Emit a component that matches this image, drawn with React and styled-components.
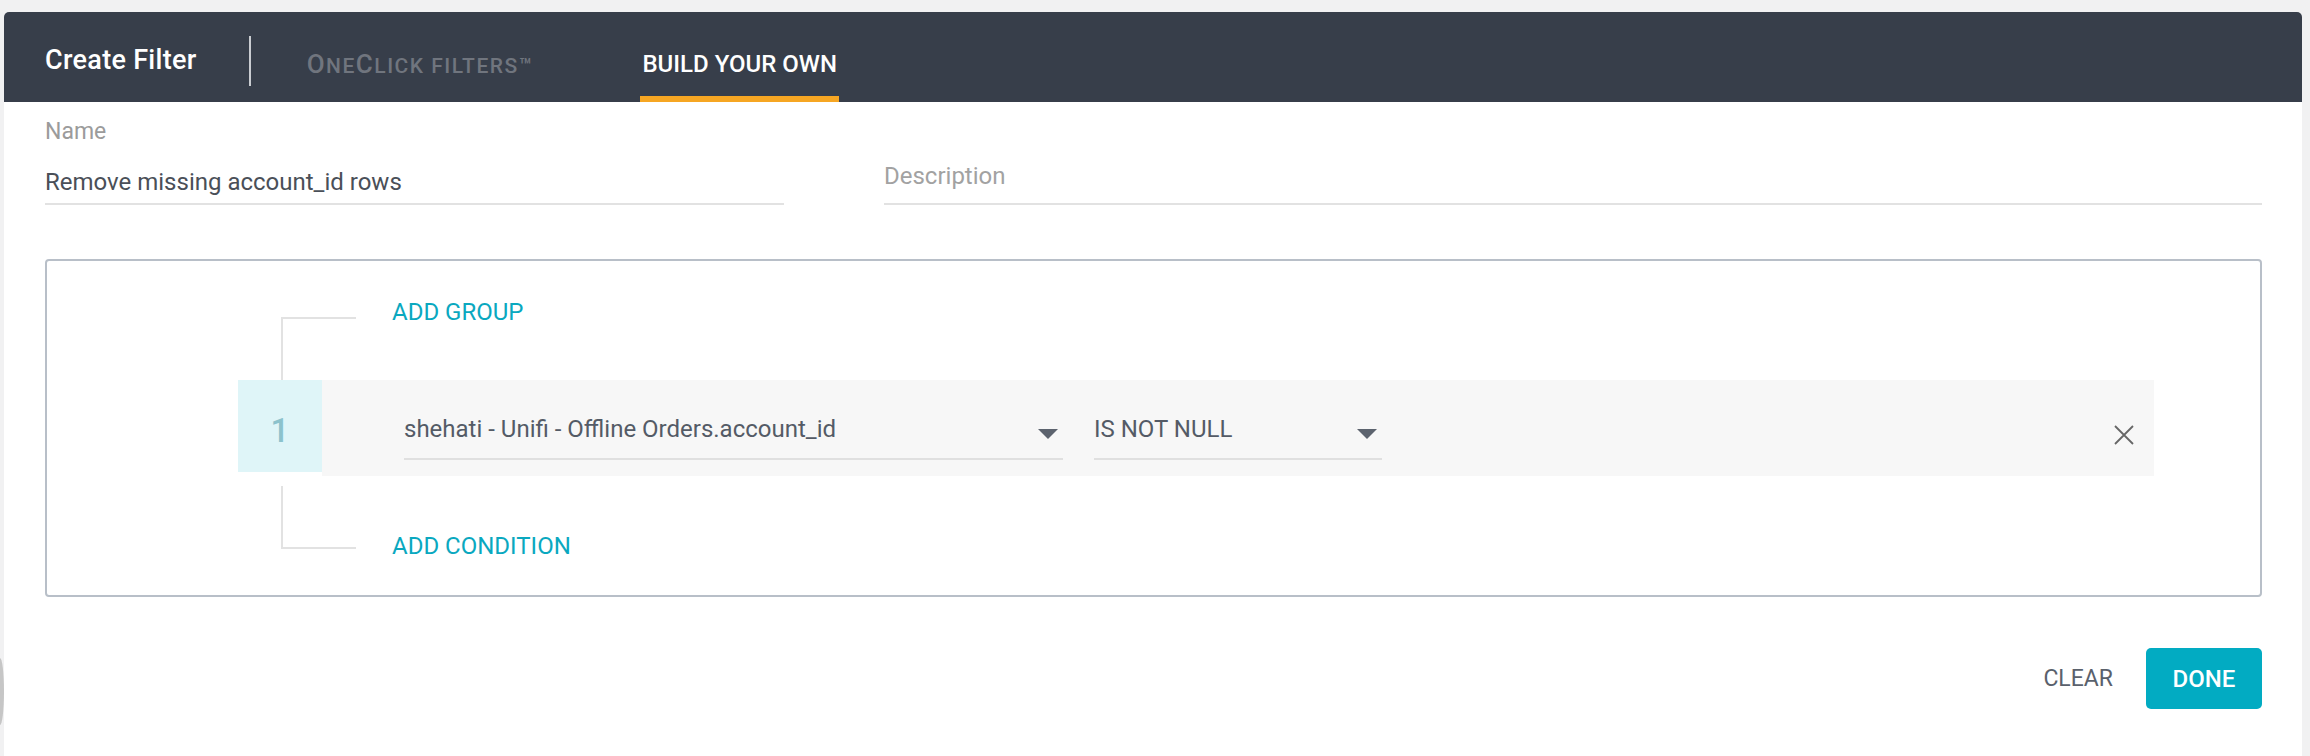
import React from 'react';
import styled, { createGlobalStyle } from 'styled-components';

const GlobalStyle = createGlobalStyle`
  html, body {
    margin: 0;
    padding: 0;
    background: #f1f1f2;
    font-family: Roboto, "Liberation Sans", Arial, sans-serif;
  }
  * {
    box-sizing: border-box;
  }
`;

const Page = styled.div`
  min-height: 100vh;
  padding: 12px 8px 0 4px;
`;

const Modal = styled.div`
  background: #fff;
  border-radius: 5px 5px 0 0;
  min-height: calc(100vh - 12px);
`;

const Header = styled.header`
  display: flex;
  align-items: flex-start;
  height: 90px;
  padding-left: 41px;
  background: #373e4a;
  border-radius: 5px 5px 0 0;
`;

const Title = styled.div`
  padding-top: 35px;
  font-size: 27px;
  line-height: 27px;
  font-weight: 500;
  letter-spacing: 0.3px;
  color: #fff;
`;

const Divider = styled.div`
  width: 2px;
  height: 50px;
  margin: 24px 0 0 52px;
  background: #c9ccd1;
`;

const Tab = styled.div`
  height: 90px;
  margin-left: ${(props) => props.offset}px;
  padding: 40px 2px 0;
  font-size: 24px;
  line-height: 24px;
  font-weight: 500;
  letter-spacing: ${(props) => (props.active ? '0' : '1.5px')};
  color: ${(props) => (props.active ? '#fff' : '#70757e')};
  border-bottom: 6px solid ${(props) => (props.active ? '#f6a623' : 'transparent')};
`;

const Big = styled.span`
  font-size: 26px;
`;

const Small = styled.span`
  font-size: 21px;
`;

const Body = styled.div`
  padding: 18px 40px 0 41px;
`;

const FieldsRow = styled.div`
  display: flex;
  align-items: flex-end;
  gap: 100px;
`;

const NameField = styled.div`
  width: 739px;
`;

const Label = styled.div`
  margin-bottom: 27px;
  font-size: 23px;
  line-height: 23px;
  color: #9b9b9b;
`;

const Input = styled.div`
  flex: ${(props) => (props.grow ? 1 : 'none')};
  padding-bottom: ${(props) => (props.placeholder ? 15 : 9)}px;
  font-size: 24px;
  line-height: 24px;
  color: ${(props) => (props.placeholder ? '#a2a2a2' : '#4a4f58')};
  border-bottom: 2px solid #e2e2e2;
`;

const FilterBox = styled.div`
  margin-top: 54px;
  padding: 0 106px 37px 191px;
  border: 2px solid #b8bfc8;
  border-radius: 4px;
`;

const Branch = styled.div`
  display: flex;
  align-items: flex-start;
`;

const Connector = styled.div`
  width: 75px;
  height: 63px;
  margin: ${(props) => (props.bottom ? '10px' : '56px')} 0 0 43px;
  border-left: 2px solid #e2e2e2;
  border-${(props) => (props.bottom ? 'bottom' : 'top')}: 2px solid #e2e2e2;
`;

const AddLink = styled.button`
  margin: ${(props) => props.top}px 0 0 36px;
  padding: 0;
  border: none;
  background: none;
  font-family: inherit;
  font-size: 24px;
  line-height: 24px;
  color: #0aa8bf;
  cursor: pointer;
`;

const Row = styled.div`
  display: flex;
  height: 96px;
`;

const NumberCell = styled.div`
  display: flex;
  align-items: center;
  justify-content: center;
  width: 84px;
  height: 92px;
  padding-top: 8px;
  background: #dff5f8;
  font-size: 33px;
  line-height: 33px;
  font-weight: 500;
  color: #8cc2cc;
`;

const Condition = styled.div`
  flex: 1;
  display: flex;
  align-items: flex-start;
  gap: 31px;
  padding: 37px 20px 0 82px;
  background: #f7f7f7;
`;

const Select = styled.div`
  display: flex;
  justify-content: space-between;
  align-items: flex-start;
  width: ${(props) => props.width}px;
  padding-bottom: 17px;
  border-bottom: 2px solid #e0e0e0;
  font-size: 24px;
  line-height: 24px;
  color: #545b66;
`;

const Caret = styled.span`
  width: 0;
  height: 0;
  margin: 12px 5px 0 0;
  border-left: 10.5px solid transparent;
  border-right: 10.5px solid transparent;
  border-top: 10px solid #5c636e;
`;

const CloseButton = styled.button`
  display: flex;
  margin: 8px 0 0 auto;
  padding: 0;
  border: none;
  background: none;
  cursor: pointer;
`;

const Footer = styled.div`
  display: flex;
  justify-content: flex-end;
  align-items: center;
  gap: 33px;
  padding-top: 51px;
`;

const ClearButton = styled.button`
  padding: 0;
  border: none;
  background: none;
  font-family: inherit;
  font-size: 23px;
  color: #5a616c;
  cursor: pointer;
`;

const DoneButton = styled.button`
  width: 116px;
  height: 61px;
  border: none;
  border-radius: 5px;
  background: #02abc2;
  font-family: inherit;
  font-size: 24px;
  font-weight: 500;
  color: #fff;
  cursor: pointer;
`;

const Grip = styled.div`
  position: fixed;
  left: -4px;
  top: 658px;
  width: 8px;
  height: 67px;
  border-radius: 50%;
  background: #c6c6c6;
`;

const CloseIcon = () => (
  <svg width="20" height="20" viewBox="0 0 20 20">
    <path d="M1 1 L19 19 M19 1 L1 19" stroke="#666" strokeWidth="1.8" fill="none" />
  </svg>
);

const App = () => (
  <Page>
    <GlobalStyle />
    <Grip />
    <Modal>
      <Header>
        <Title>Create Filter</Title>
        <Divider />
        <Tab offset={54}>
          <Big>O</Big>
          <Small>NE</Small>
          <Big>C</Big>
          <Small>LICK FILTERS™</Small>
        </Tab>
        <Tab offset={105} active>
          BUILD YOUR OWN
        </Tab>
      </Header>

      <Body>
        <FieldsRow>
          <NameField>
            <Label>Name</Label>
            <Input>Remove missing account_id rows</Input>
          </NameField>
          <Input grow placeholder>
            Description
          </Input>
        </FieldsRow>

        <FilterBox>
          <Branch>
            <Connector />
            <AddLink top={39}>ADD GROUP</AddLink>
          </Branch>

          <Row>
            <NumberCell>1</NumberCell>
            <Condition>
              <Select width={659}>
                shehati - Unifi - Offline Orders.account_id
                <Caret />
              </Select>
              <Select width={288}>
                IS NOT NULL
                <Caret />
              </Select>
              <CloseButton>
                <CloseIcon />
              </CloseButton>
            </Condition>
          </Row>

          <Branch>
            <Connector bottom />
            <AddLink top={58}>ADD CONDITION</AddLink>
          </Branch>
        </FilterBox>

        <Footer>
          <ClearButton>CLEAR</ClearButton>
          <DoneButton>DONE</DoneButton>
        </Footer>
      </Body>
    </Modal>
  </Page>
);

export default App;
